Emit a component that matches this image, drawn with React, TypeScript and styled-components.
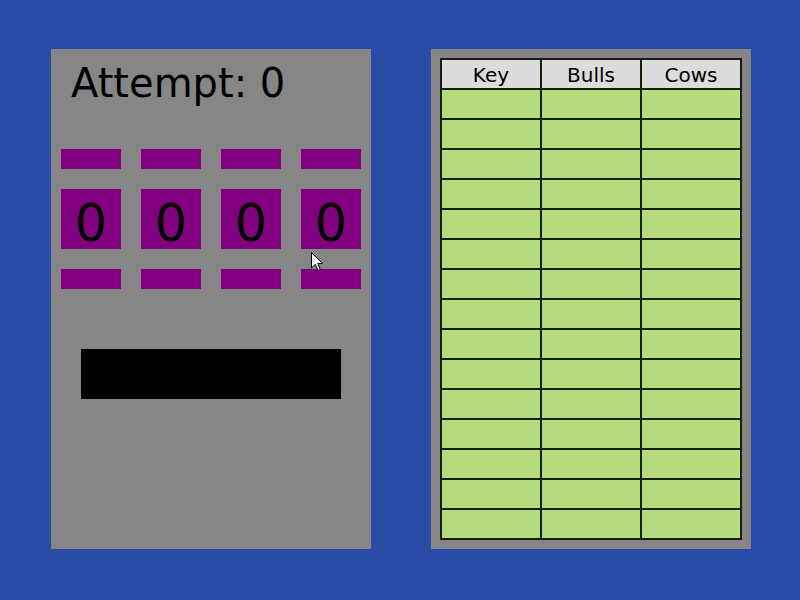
import React from 'react'
import styled, { createGlobalStyle } from 'styled-components'

const GlobalStyle = createGlobalStyle`
  html, body {
    margin: 0;
    padding: 0;
    background: #2b4ca6;
  }
  body {
    font-family: 'DejaVu Sans', 'Liberation Sans', sans-serif;
    color: #000;
  }
`

const Screen = styled.div`
  position: relative;
  width: 800px;
  height: 600px;
  box-sizing: border-box;
  padding: 49px 0 0 51px;
  display: flex;
  gap: 60px;
  background: #2b4ca6;
  overflow: hidden;
`

const Panel = styled.div`
  width: 320px;
  height: 500px;
  background: #868686;
  box-sizing: border-box;
`

const GamePanel = styled(Panel)`
  display: flex;
  flex-direction: column;
  padding: 11px 10px 0 10px;
`

const Title = styled.h1`
  margin: 0 0 0 10px;
  font-size: 40px;
  font-weight: normal;
  line-height: 46px;
`

const Digits = styled.div`
  margin-top: 43px;
  display: grid;
  grid-template-columns: repeat(4, 60px);
  column-gap: 20px;
  row-gap: 20px;
`

const Bar = styled.div`
  height: 20px;
  background: #800080;
`

const DigitBox = styled.div`
  height: 60px;
  box-sizing: border-box;
  padding-top: 10px;
  background: #800080;
  font-size: 51px;
  line-height: 50px;
  text-align: center;
`

const SubmitBar = styled.div`
  margin: 60px auto 0 auto;
  width: 260px;
  height: 50px;
  background: #000;
`

const ScorePanel = styled(Panel)`
  padding: 9px;
`

const Table = styled.div`
  width: 302px;
  box-sizing: border-box;
  padding: 2px;
  background: #14200c;
  display: grid;
  grid-template-columns: repeat(3, 98px);
  grid-auto-rows: 28px;
  gap: 2px;
`

const Cell = styled.div<{ $head?: boolean }>`
  background: ${(p) => (p.$head ? '#dcdcdc' : '#b4dc7c')};
  font-size: 20px;
  box-sizing: border-box;
  padding-top: 2px;
  line-height: 26px;
  text-align: center;
`

const Cursor = styled.svg`
  position: absolute;
  left: 311px;
  top: 252px;
`

const headers = ['Key', 'Bulls', 'Cows']
const rows = Array.from({ length: 15 }, (_, i) => i)

export default function App() {
  const digits = [0, 0, 0, 0]
  return (
    <>
      <GlobalStyle />
      <Screen>
        <GamePanel>
          <Title>Attempt: 0</Title>
          <Digits>
            {digits.map((_, i) => <Bar key={'u' + i} />)}
            {digits.map((d, i) => <DigitBox key={'d' + i}>{d}</DigitBox>)}
            {digits.map((_, i) => <Bar key={'l' + i} />)}
          </Digits>
          <SubmitBar />
        </GamePanel>
        <ScorePanel>
          <Table>
            {headers.map((h) => (
              <Cell key={h} $head>{h}</Cell>
            ))}
            {rows.map((r) =>
              headers.map((h) => <Cell key={h + r} />)
            )}
          </Table>
        </ScorePanel>
        <Cursor width="14" height="20" viewBox="0 0 14 20">
          <path d="M0.5 0.5 L0.5 16 L4.3 12.4 L7 18.5 L9.3 17.5 L6.7 11.5 L11.5 11.5 Z" fill="#fff" stroke="#000" strokeWidth="1" />
        </Cursor>
      </Screen>
    </>
  )
}
